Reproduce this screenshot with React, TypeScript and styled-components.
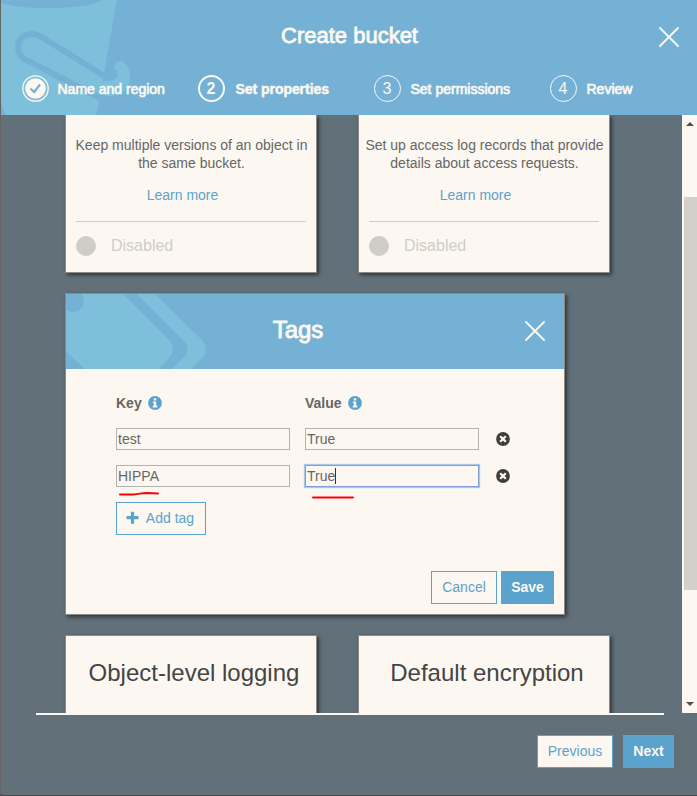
import React from 'react';
import styled, { createGlobalStyle } from 'styled-components';

const cream = '#fcf8f1';
const blue = '#5ba2cc';
const sky = '#74b1d5';
const paleSky = '#7ebfdb';

const GlobalStyle = createGlobalStyle`
  * { box-sizing: border-box; }
  body { margin: 0; background: #4a5358; font-family: "Liberation Sans", Arial, sans-serif; }
  h1, h2, h3, p { margin: 0; font-weight: 400; }
`;

const Dialog = styled.div`
  width: 697px;
  height: 796px;
  overflow: hidden;
  display: flex;
  flex-direction: column;
  background: #627179;
  border-left: 1px solid #656565;
  border-bottom: 1px solid #41494f;
  border-bottom-left-radius: 4px;
  color: #666;
  font-size: 14px;
`;

const Header = styled.header`
  position: relative;
  flex: none;
  height: 115px;
  background: ${sky};
  color: ${cream};
`;

const Artwork = styled.svg`
  position: absolute;
  left: 0;
  top: 0;
  display: block;
`;

const TitleRow = styled.div`
  position: relative;
  height: 72px;
  padding-left: 1px;
  display: flex;
  align-items: center;
  justify-content: center;
`;

const DialogTitle = styled.h1`
  font-size: 22px;
  line-height: 26px;
  -webkit-text-stroke: 0.8px ${cream};
`;

const CloseButton = styled.button<{ $right: number; $top: number }>`
  position: absolute;
  right: ${(p) => p.$right}px;
  top: ${(p) => p.$top}px;
  width: 22px;
  height: 22px;
  padding: 0;
  border: 0;
  background: none;
  svg { display: block; }
`;

const Steps = styled.nav`
  position: relative;
  display: grid;
  grid-template-columns: 176px 176px 176px 1fr;
  padding-left: 20px;
  margin-top: 2px;
`;

const Step = styled.div<{ $active?: boolean; $gap?: number }>`
  display: flex;
  align-items: center;
  gap: ${(p) => p.$gap ?? 10}px;
  height: 29px;
  padding-left: 0.5px;
  white-space: nowrap;
  font-weight: ${(p) => (p.$active ? 700 : 400)};
  letter-spacing: ${(p) => (p.$active ? '-0.05px' : '0')};
  -webkit-text-stroke: ${(p) => (p.$active ? '0.5px' : '0.7px')} ${cream};
`;

const StepNumber = styled.span<{ $active?: boolean }>`
  width: 27px;
  height: 27px;
  border: ${(p) => (p.$active ? 2 : 1)}px solid ${cream};
  border-radius: 50%;
  display: flex;
  align-items: center;
  justify-content: center;
  font-size: 16px;
  line-height: 16px;
  padding-top: 1px;
  -webkit-text-stroke: 0;
`;

const Viewport = styled.div`
  flex: none;
  height: 598px;
  overflow: hidden;
  display: flex;
`;

const Content = styled.main`
  width: 681px;
  padding-left: 64px;
`;

const CardRow = styled.div`
  display: flex;
  gap: 41px;
`;

const Card = styled.section<{ $top?: boolean }>`
  width: 252px;
  height: ${(p) => (p.$top ? 158 : 100)}px;
  padding: ${(p) => (p.$top ? '21px 10px 0' : '23px 0 0')};
  background: ${cream};
  border: 1px solid #8c8986;
  border-top-width: ${(p) => (p.$top ? 0 : 1)}px;
  box-shadow: 2px 2px 4px rgba(0, 0, 0, 0.55);
  text-align: center;
`;

const Description = styled.p`
  margin: 0 -6px;
  padding-left: 1px;
  line-height: 18px;
  white-space: nowrap;
`;

const LearnMore = styled.a`
  display: block;
  margin: 14px 17px 0 0;
  line-height: 18px;
  color: ${blue};
`;

const Status = styled.div`
  margin-top: 17px;
  padding-top: 13px;
  border-top: 1px solid #cfcdc8;
  display: flex;
  align-items: center;
  gap: 15px;
  font-size: 16px;
  line-height: 22px;
  color: #cfcdc8;
`;

const StatusDot = styled.span`
  width: 20px;
  height: 20px;
  border-radius: 50%;
  background: #cfcdc8;
`;

const CardTitle = styled.h3`
  padding-left: 6px;
  font-size: 24px;
  line-height: 28px;
  color: #444;
`;

const TagsPanel = styled.section`
  width: 500px;
  height: 322px;
  margin: 20px 0;
  background: ${cream};
  border: 1px solid #8c8986;
  box-shadow: 2px 2px 4px rgba(0, 0, 0, 0.55);
`;

const TagsHeader = styled.div`
  position: relative;
  height: 75px;
  padding: 22px 34px 0 0;
  background: ${sky};
  color: ${cream};
  text-align: center;
`;

const TagsTitle = styled.h2`
  position: relative;
  font-size: 24px;
  line-height: 28px;
  -webkit-text-stroke: 0.9px ${cream};
`;

const TagsBody = styled.div`
  padding: 25px 10px 0 50px;
`;

const TagRow = styled.div`
  display: grid;
  grid-template-columns: 174px 174px 14px;
  column-gap: 15px;
  align-items: center;
  height: 22px;
  margin-bottom: 15px;
  svg { display: block; margin-left: 2px; }
`;

const HeadingRow = styled(TagRow)`
  height: 18px;
  margin-bottom: 16px;
`;

const Label = styled.div`
  display: flex;
  align-items: center;
  font-weight: 700;
  gap: 6px;
  svg { margin: 0; }
`;

const Field = styled.div<{ $focus?: boolean }>`
  height: 22px;
  padding: 0 1px;
  display: flex;
  align-items: center;
  border: 1px solid ${(p) => (p.$focus ? '#829fd5' : '#b4b2ae')};
  box-shadow: ${(p) => (p.$focus ? '0 0 1px 1px #a6c8ea' : 'none')};
  line-height: 18px;
`;

const Caret = styled.i`
  width: 1px;
  height: 16px;
  background: #333;
`;

const TagTable = styled.div`
  position: relative;
`;

const Marks = styled.svg`
  position: absolute;
  left: 0;
  top: 83px;
  pointer-events: none;
`;

const Button = styled.button<{ $primary?: boolean; $width: number }>`
  width: ${(p) => p.$width}px;
  height: 33px;
  padding: 0 0 2px;
  display: flex;
  align-items: center;
  justify-content: center;
  gap: 7px;
  border: 1px solid ${blue};
  border-radius: 0;
  background: ${(p) => (p.$primary ? blue : cream)};
  color: ${(p) => (p.$primary ? cream : blue)};
  font: ${(p) => (p.$primary ? 700 : 400)} 14px "Liberation Sans", Arial, sans-serif;
`;

const AddButton = styled(Button)`
  padding-right: 2px;
`;

const PanelActions = styled.div`
  display: flex;
  justify-content: flex-end;
  gap: 4px;
  margin-top: 36px;
`;

const Scrollbar = styled.div`
  width: 15px;
  height: 598px;
  display: flex;
  flex-direction: column;
  justify-content: space-between;
  align-items: flex-end;
  background: ${cream};
`;

const Thumb = styled.div`
  width: 13px;
  height: 393px;
  margin-bottom: 41px;
  background: #d3cfc9;
`;

const Arrow = styled.span<{ $down?: boolean }>`
  width: 0;
  height: 0;
  margin: ${(p) => (p.$down ? '0 3px 7px 0' : '7px 3px 0 0')};
  border: 4px solid transparent;
  border-width: ${(p) => (p.$down ? '4px 4px 0' : '0 4px 4px')};
  border-top-color: ${(p) => (p.$down ? '#505050' : 'transparent')};
  border-bottom-color: ${(p) => (p.$down ? 'transparent' : '#505050')};
`;

const Footer = styled.footer`
  width: 628px;
  margin-left: 35px;
  border-top: 2px solid ${cream};
`;

const FooterActions = styled.div`
  display: flex;
  justify-content: flex-end;
  gap: 10px;
  margin: 20px -10px 0 0;
`;

const Cross = () => (
  <svg width="22" height="22" viewBox="0 0 22 22" stroke={cream} strokeWidth="1.9" strokeLinecap="round">
    <path d="M2 2 20 20M20 2 2 20" />
  </svg>
);

const InfoIcon = () => (
  <svg width="14" height="14" viewBox="0 0 14 14">
    <circle cx="7" cy="7" r="6.9" fill={blue} />
    <path d="M5.8 2.2H8.2V4.4H5.8ZM4.9 5.4H8.2V9.8H9.3V11.6H4.7V9.8H5.8V7.2H4.9Z" fill={cream} />
  </svg>
);

const RemoveIcon = () => (
  <svg width="14" height="14" viewBox="0 0 14 14">
    <circle cx="7" cy="7" r="6.9" fill="#3e3f3c" />
    <path d="M4.2 4.2 9.8 9.8M9.8 4.2 4.2 9.8" stroke={cream} strokeWidth="2.3" />
  </svg>
);

const PlusIcon = () => (
  <svg width="13" height="13" viewBox="0 0 13 13">
    <path d="M6.5 0.7V12.7M0.5 6.7H12.5" stroke={blue} strokeWidth="3.2" />
  </svg>
);

const BucketArt = () => (
  <Artwork width="140" height="115" viewBox="1 0 140 115" fill="none">
    <path d="M1 0H117L97 112Q96 115 94 115H6Q2 109 1 101Z" fill={paleSky} />
    <path d="M1 0H101C94 6 70 8 48 8S10 6 1 3Z" fill={sky} />
    <path d="M100 98 26 60C13 52 17 34 32 34Q37 34 43 38L106 77" stroke={sky} strokeWidth="6" />
    <path d="M98 80C109 84 117 80 118 74Q118 71 115 69C113 65 116 61 121 61C127 62 131 71 130 79C128 94 115 99 98 94Z" fill={paleSky} />
  </Artwork>
);

const TagArt = () => (
  <Artwork width="145" height="75" viewBox="0 0 145 75">
    <path d="M0 0H57L103 46Q111 54 103 64L93 75H19L0 57Z" fill={paleSky} />
    <circle cx="7" cy="7" r="11" fill={sky} />
    <path d="M71 0H89L135 45Q145 55 135 65L125 75H106L117 64Q126 55 117 46Z" fill={paleSky} />
  </Artwork>
);

type Feature = { lines: [string, string] };
const features: Feature[] = [
  { lines: ['Keep multiple versions of an object in', 'the same bucket.'] },
  { lines: ['Set up access log records that provide', 'details about access requests.'] },
];

export default function App() {
  return (
    <>
      <GlobalStyle />
      <Dialog>
        <Header>
          <BucketArt />
          <TitleRow>
            <DialogTitle>Create bucket</DialogTitle>
            <CloseButton $right={17} $top={26} aria-label="Close"><Cross /></CloseButton>
          </TitleRow>
          <Steps>
            <Step $gap={9}>
              <svg width="27" height="27" viewBox="0 0 27 27" fill="none">
                <circle cx="13.5" cy="13.5" r="12.7" stroke={cream} strokeWidth="1.3" />
                <circle cx="13.5" cy="13.5" r="10.3" fill={cream} />
                <path d="m8.500 13.500 3.700 3.500 5.800-7.500" stroke={sky} strokeWidth="2.2" />
              </svg>
              Name and region
            </Step>
            <Step $active $gap={11}><StepNumber $active>2</StepNumber>Set properties</Step>
            <Step><StepNumber>3</StepNumber>Set permissions</Step>
            <Step><StepNumber>4</StepNumber>Review</Step>
          </Steps>
        </Header>
        <Viewport>
          <Content>
            <CardRow>
              {features.map(({ lines }) => (
                <Card $top key={lines[0]}>
                  <Description>{lines[0]}<br />{lines[1]}</Description>
                  <LearnMore>Learn more</LearnMore>
                  <Status><StatusDot />Disabled</Status>
                </Card>
              ))}
            </CardRow>
            <TagsPanel>
              <TagsHeader>
                <TagArt />
                <TagsTitle>Tags</TagsTitle>
                <CloseButton $right={18} $top={26} aria-label="Close tags"><Cross /></CloseButton>
              </TagsHeader>
              <TagsBody>
                <TagTable>
                  <HeadingRow>
                    <Label>Key <InfoIcon /></Label>
                    <Label>Value <InfoIcon /></Label>
                  </HeadingRow>
                  <TagRow>
                    <Field>test</Field><Field>True</Field><RemoveIcon />
                  </TagRow>
                  <TagRow>
                    <Field>HIPPA</Field><Field $focus>True<Caret /></Field><RemoveIcon />
                  </TagRow>
                  <Marks width="250" height="24" fill="none" stroke="#fb0008" strokeWidth="2" strokeLinecap="round">
                    <path d="M4 17.500H17C25 17 24 16 31 16L42 16.500M197 20.500H237" />
                  </Marks>
                </TagTable>
                <AddButton $width={90}><PlusIcon />Add tag</AddButton>
                <PanelActions>
                  <Button $width={66}>Cancel</Button>
                  <Button $primary $width={53}>Save</Button>
                </PanelActions>
              </TagsBody>
            </TagsPanel>
            <CardRow>
              <Card><CardTitle>Object-level logging</CardTitle></Card>
              <Card><CardTitle>Default encryption</CardTitle></Card>
            </CardRow>
          </Content>
          <Scrollbar><Arrow /><Thumb /><Arrow $down /></Scrollbar>
        </Viewport>
        <Footer>
          <FooterActions>
            <Button $width={76}>Previous</Button>
            <Button $primary $width={51}>Next</Button>
          </FooterActions>
        </Footer>
      </Dialog>
    </>
  );
}
